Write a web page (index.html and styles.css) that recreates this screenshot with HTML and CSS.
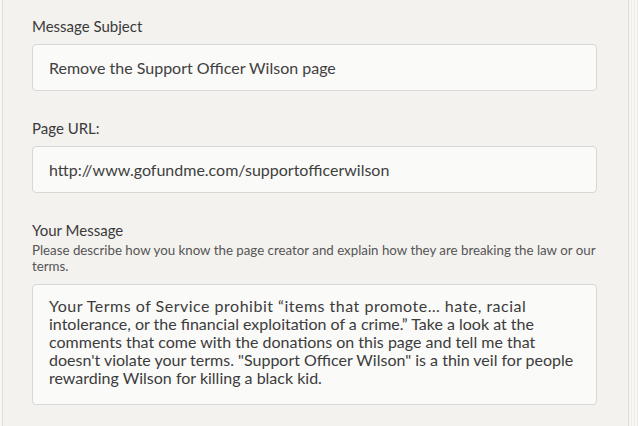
FILE: index.html
```html
<!DOCTYPE html>
<html>
<head>
<meta charset="utf-8">
<link rel="stylesheet" href="styles.css">
</head>
<body>
<div class="page">
  <div class="gutter-left"></div>
  <main class="panel">
    <div class="field">
      <div class="label">Message Subject</div>
      <div class="input">Remove the Support Officer Wilson page</div>
    </div>
    <div class="field">
      <div class="label">Page URL:</div>
      <div class="input">http://www.gofundme.com/supportofficerwilson</div>
    </div>
    <div class="field">
      <div class="label label-tight">Your Message</div>
      <div class="hint">Please describe how you know the page creator and explain how they are breaking the law or our terms.</div>
      <div class="textarea">Your Terms of Service prohibit “items that promote… hate, racial intolerance, or the financial exploitation of a crime.” Take a look at the comments that come with the donations on this page and tell me that doesn't violate your terms. "Support Officer Wilson" is a thin veil for people rewarding Wilson for killing a black kid.</div>
    </div>
  </main>
  <div class="gutter-right"></div>
</div>
</body>
</html>
```

FILE: styles.css
```css
html, body {
  margin: 0;
  padding: 0;
}

body {
  background: #f3f2ef;
  font-family: Lato, "Open Sans", sans-serif;
  color: #3d3d3d;
  overflow: hidden;
}

.page {
  display: flex;
  height: 426px;
  overflow: hidden;
}

.gutter-left {
  width: 2px;
  background: #f7f7f5;
  border-right: 1px solid #dedddb;
}

.panel {
  flex: 1;
  padding: 17px 31px 0 29px;
  background: #f3f2ef;
}

.gutter-right {
  width: 9px;
  border-left: 1px solid #dfddd9;
  background: repeating-linear-gradient(90deg, #f7f6f2 0, #f7f6f2 2px, #efede8 2px, #efede8 3px);
}

.field {
  margin-bottom: 28px;
}

.label {
  font-size: 15px;
  line-height: 18px;
  color: #3a3a3a;
  margin-bottom: 9px;
}

.label-tight {
  margin-bottom: 3px;
}

.hint {
  font-size: 13.3px;
  line-height: 16px;
  color: #555;
  margin-bottom: 10px;
}

.input {
  height: 45px;
  line-height: 45px;
  padding: 0 16px;
  font-size: 16px;
  color: #404040;
  background: #fafaf9;
  border: 1px solid #d7d7d5;
  border-radius: 4px;
  white-space: nowrap;
  overflow: hidden;
}

.textarea {
  padding: 12px 16px 17px;
  font-size: 16px;
  line-height: 18px;
  color: #3c3c3c;
  background: #fafaf9;
  border: 1px solid #d7d7d5;
  border-radius: 4px;
}

.textarea::first-line {
  letter-spacing: 0.5px;
}
```
